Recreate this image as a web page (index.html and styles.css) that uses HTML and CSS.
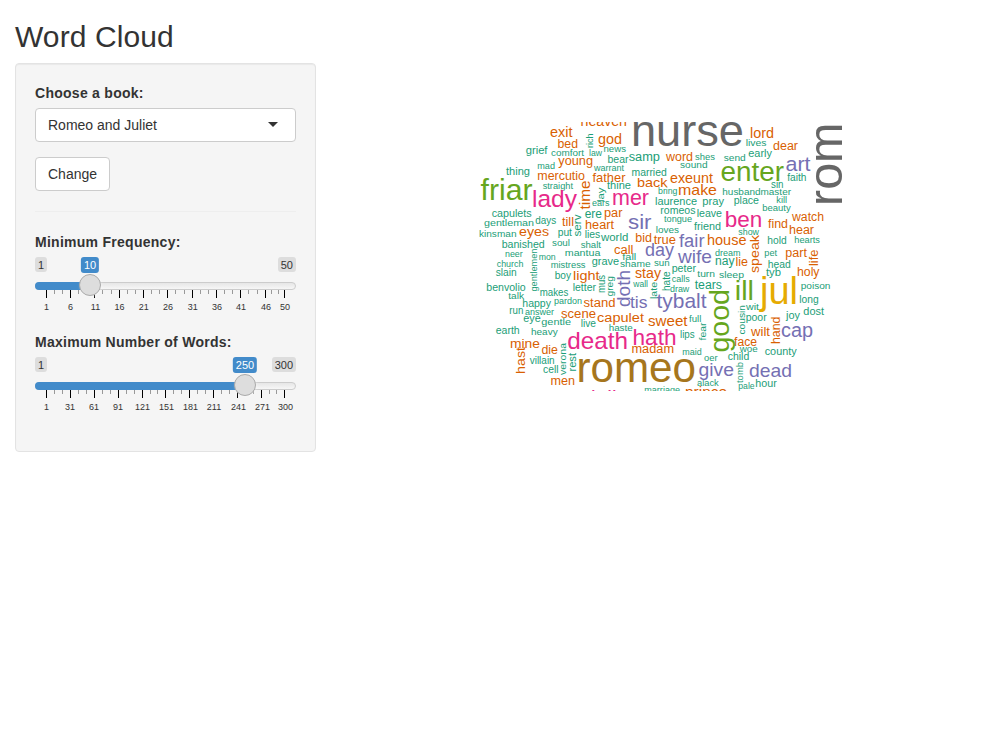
FILE: index.html
```html
<!DOCTYPE html>
<html lang="en">
<head>
<meta charset="utf-8">
<title>Word Cloud</title>
<link rel="stylesheet" href="styles.css">
</head>
<body>
<div class="container">
  <h2 class="title">Word Cloud</h2>
  <div class="row">
    <form class="well">
      <label class="label">Choose a book:</label>
      <div class="select"><span>Romeo and Juliet</span><span class="caret"></span></div>
      <button type="button" class="btn">Change</button>
      <hr class="rule">
      <label class="label">Minimum Frequency:</label>
      <div class="slider">
        <div class="bounds"><span class="bound">1</span><span class="bound">50</span></div>
        <div class="track"><div class="bar bar-freq"></div></div>
        <span class="value value-freq">10</span>
        <svg class="grid" id="grid-freq" width="261" height="24"></svg>
        <span class="handle handle-freq"></span>
      </div>
      <label class="label">Maximum Number of Words:</label>
      <div class="slider">
        <div class="bounds"><span class="bound">1</span><span class="bound">300</span></div>
        <div class="track"><div class="bar bar-max"></div></div>
        <span class="value value-max">250</span>
        <svg class="grid" id="grid-max" width="261" height="24"></svg>
        <span class="handle handle-max"></span>
      </div>
    </form>
    <main class="plot">
      <svg class="cloud" id="cloud" width="372" height="269" viewBox="475 122 372 269"></svg>
    </main>
  </div>
</div>
<script src="cloud.js"></script>
</body>
</html>
```
FILE: styles.css
```css
* { box-sizing: border-box; }
body {
  margin: 0;
  background: #fff;
  color: #333;
  font: 14px/20px "Liberation Sans", Arial, sans-serif;
}
.container { padding: 0 15px; overflow: hidden; }
.title { margin: 20px 0 10px; font-size: 30px; line-height: 33px; font-weight: 400; letter-spacing: 0.1px; }
.row { display: flex; align-items: flex-start; }
.well {
  width: 301px;
  height: 389px;
  padding: 19px;
  background: #f5f5f5;
  border: 1px solid #e3e3e3;
  border-radius: 4px;
  box-shadow: inset 0 1px 1px rgba(0, 0, 0, .05);
}
.label { display: block; margin-bottom: 5px; font-weight: 700; letter-spacing: 0.27px; }
.select {
  display: flex;
  align-items: center;
  justify-content: space-between;
  height: 34px;
  margin-bottom: 15px;
  padding: 0 17px 0 12px;
  background: #fff;
  border: 1px solid #ccc;
  border-radius: 4px;
}
.caret { margin-bottom: 1px; border: 5px solid transparent; border-top-color: #333; border-bottom: 0; }
.btn {
  display: block;
  height: 34px;
  padding: 6px 12px;
  background: #fff;
  border: 1px solid #ccc;
  border-radius: 4px;
  color: #333;
  font: inherit;
}
.rule { margin: 20px 0; border: 0; border-top: 1px solid #eee; }
.slider { position: relative; height: 60px; margin-bottom: 15px; font-size: 11px; }
.bounds { display: flex; justify-content: space-between; height: 25px; }
.bound, .value { height: 15px; padding: 0 3px; border-radius: 3px; line-height: 16px; }
.bound { background: #ddd; color: #333; }
.track {
  height: 8px;
  border: 1px solid #ccc;
  border-radius: 8px;
  background: linear-gradient(#dedede -50%, #fff 150%);
}
.bar { height: 8px; margin: -1px; background: #428bca; border-radius: 8px 0 0 8px; }
.bar-freq { width: 55px; }
.bar-max { width: 210px; }
.value { position: absolute; top: 0; height: 16px; background: #428bca; color: #fff; transform: translateX(-50%); }
.value-freq { left: 55px; }
.value-max { left: 210px; }
.grid { display: block; overflow: visible; font-size: 9px; fill: #333; text-anchor: middle; }
.major { fill: #000; }
.minor { fill: #999; }
.handle {
  position: absolute;
  top: 17px;
  width: 22px;
  height: 22px;
  background: #ddd;
  border: 1px solid #aaa;
  border-radius: 50%;
  box-shadow: 1px 1px 3px rgba(255, 255, 255, .3);
}
.handle-freq { left: 44px; }
.handle-max { left: 199px; }
.plot { flex: 1; padding: 59px 0 0 159px; }
.cloud { display: block; overflow: hidden; font-family: "Liberation Sans", Arial, sans-serif; }
.teal { fill: #1b9e77; }
.orange { fill: #d95f02; }
.purple { fill: #7570b3; }
.pink { fill: #e7298a; }
.green { fill: #66a61e; }
.yellow { fill: #e6ab02; }
.brown { fill: #a6761d; }
.gray { fill: #666; }
```
FILE: cloud.js
```js
const NS = "http://www.w3.org/2000/svg";

function add(parent, tag, attrs, text) {
  const el = document.createElementNS(NS, tag);
  for (const key in attrs) el.setAttribute(key, attrs[key]);
  if (text) el.textContent = text;
  parent.appendChild(el);
}

// Slider scales: major tick offsets, label centres and label texts
function drawGrid(id, ticks, centres, labels) {
  const svg = document.getElementById(id);
  ticks.forEach((x, i) => {
    add(svg, "rect", { class: "major", x, y: 0, width: 1, height: 8 });
    if (i < ticks.length - 1) {
      const step = (ticks[i + 1] - x) / 3;
      for (const k of [1, 2])
        add(svg, "rect", { class: "minor", x: Math.round(x + step * k), y: 0, width: 1, height: 4 });
    }
    add(svg, "text", { x: centres[i], y: 20 }, String(labels[i]));
  });
}
drawGrid("grid-freq", [11, 35, 59, 84, 108, 132, 157, 181, 205, 230, 249],
  [11.5, 35.5, 60.5, 84.5, 108.7, 133, 157.7, 182, 206, 231, 250],
  [1, 6, 11, 16, 21, 26, 31, 36, 41, 46, 50]);
drawGrid("grid-max", [11, 35, 59, 83, 107, 130, 154, 178, 202, 226, 249],
  [11.5, 35, 59, 83, 107.5, 131.5, 155.5, 179, 203.5, 227.5, 250.5],
  [1, 31, 61, 91, 121, 151, 181, 211, 241, 271, 300]);

// word, left, right, baseline, font size
const across = {
  teal: `grief 525.7 547.5 154 10;comfort 551 584 155.5 9;law 589 602 156 9;mad 537.3 555 169 9
thing 506 530 175 10;straight 542.7 573 189 9;news 603.5 626 152 9.5;bear 607.5 628.5 163 10
samp 628.7 660 161 12;shes 695 715 160 9.5;sound 680 707.5 168 9;warrant 594 624 171 8.5
married 631.5 666.7 175.5 10;thine 607 631 189 10;bring 658 677.5 193.5 8.5;laurence 655 697 204.5 10
pray 702.3 724 204.5 10;ears 592 609.5 206 8.5;lives 745.7 766.5 146 9.5;early 748.3 772 157 10
send 723.7 745.7 161 9.5;faith 787.3 806.5 181 10;sin 771 783.5 188 10;husbandmaster 722.3 791 195 9
place 733.7 759 203.5 10;kill 776.3 787 203 9;capulets 491.7 531.7 217 10.5;gentleman 484 534 226 9.5
days 535.3 556.3 223.5 10;ere 584.7 602 218 12;kinsman 479 516.5 236.5 9.5;put 557.7 572 236 10.5
lies 584.7 600.3 237.5 10;banished 501.7 544.7 248 10;soul 552 570 246 9.5;shalt 580.7 601 248 9
mantua 564.7 600.5 256 9.5;neer 505 522.7 257 9;mon 538.7 555.7 260 9;mistress 550.7 585.5 268 9
church 496.7 523.5 267 9;slain 495.7 516.7 276 10.5;boy 554.7 571 279 10;grave 591.7 619 265 10
letter 572.7 596 290.5 10;benvolio 486.3 525.7 291 10;makes 539.7 568.3 295.5 10;talk 508.3 524 299 9.5
pardon 554 582 304 9;romeos 660.3 695.5 214 10;leave 696.7 722 217 10;tongue 664 692 222 9
loves 655.7 679 233 9.5;friend 694 721 230 10;world 601 628.3 240.5 10;fall 622.3 636.3 260 9.5
shame 620 650.7 267 9.5;sun 654 669.7 266 9.5;dream 715 740.5 256 9;peter 671.7 696 272 10.5
turn 697.3 715 277 9.5;calls 671.7 689.7 281.5 9.5;tears 694.7 722 289 12;wall 633.3 648 287 8.5
draw 670 689.3 292 9;beauty 762.3 790.7 211 9;show 738.3 759 235 9;hold 767.3 786.7 243.5 10.5
hearts 794.3 820 243 9;nay 715 734.5 265 12;pet 764.3 777 256 9;head 767.7 790.7 267.5 10.5
tyb 766 781 275.5 10.5;sleep 719 744 278 9.5;poison 800.7 830.5 289 9.5;happy 522.3 551 307 10
run 509.3 523.3 314 10;answer 525 554 315 9;eye 523.3 540.7 322 10.5;gentle 541.3 571 325 9.5
live 580.7 596 327 10;earth 495.7 519.7 333.5 10;heavy 531 557.7 335 9;villain 529.7 554.7 364 10
cell 543 558.5 373 10.5;full 689 701.3 322 9;haste 608.7 632.7 331 9;lips 680 694.7 338 10
maid 682.3 701.7 355 9.5;oer 704 717.5 360.5 9;alack 697 718.7 386 9.5;marriage 644.3 680 393 8.5
wit 746 759 310 9.5;poor 745.7 766.7 321 10.5;joy 786 800 318.5 10;dost 803.3 824 315 10.5
long 799.3 818.7 303 10;woe 739.7 757.7 352 9.5;county 764.7 796.7 355 10;child 727.7 749.3 360 10
pale 738.3 754.7 389 9.5;hour 755.3 776.7 387 10.5`,
  orange: `exit 550 572.5 137 14;bed 557.5 578 148 12.5;young 558.3 593 165 12.6;mercutio 537.3 585 180 12.5
heaven 580.5 627 126 14;god 598 622 143.5 14;word 666 693 161 12.5;father 592.5 625.5 182 12.6
exeunt 670 713 183 14;back 637 667.5 187 13.5;make 678 717 195 15;lord 750 774 138 14
dear 773 798 150 12.5;till 562 574 226 13;heart 585 614 229 12.5;eyes 519 549 236 13.7
light 573 599.5 280 13.7;par 604 622.5 217 12.5;bid 635.3 652 241.5 12.5;true 653.7 676 243.5 12.5
house 707 746.5 245 14;call 614 633.5 253.5 12.5;stay 635 661 278 13.8;watch 792 824 221 12.3
find 768 788 227.5 12.5;hear 789 814 234 12.5;lie 735.5 748 265.5 12.5;part 785.3 807 256.5 12.5
holy 797 819.5 275.5 12.3;stand 583.5 615.5 307 12.5;scene 561 596 317.5 12.7;mine 510 540 347.5 13.7
die 541.5 558 354 12.5;men 550.5 575 384.5 12.5;capulet 597 644 321.5 13.7;sweet 648 687.5 326 14.2
madam 631.5 674 353 12.5;wilt 751 770 336 12.3;face 734 757 345.5 12.3;prince 685 727 397 14`,
  purple: `art 785.5 810.5 170.5 20.5;sir 628 651.5 229 21;fair 679 704.5 247 18;day 645 674 256 17.8
wife 678 712 263 18.5;tis 630 647.5 307.5 17;tybalt 656.5 706.5 308 20.8;give 698.5 734 376 19
cap 781 813 336.5 19.5;dead 749 792 377 19`,
  pink: `lady 532 577 207 24.5;mer 612 649 205 21.5;ben 724.8 762.3 227 22.5;death 567.3 628 349 24
hath 632.5 676.5 344.5 22.5;juliet 591 634 405.5 22`,
  green: `friar 480.5 532.5 200 30;enter 720.5 784 181 27.5;ill 734.8 754 300 28.5`,
  yellow: `jul 760 798 304 38`,
  brown: `romeo 576.5 696 382 42`,
  gray: `nurse 631 744 146 45`
};

// word, baseline x, bottom, top, font size; these read upwards
const upward = {
  teal: `rich 592.7 148 133.5 9;lay 604 202 187.5 9.5;serv 580.5 236.5 214.5 10;gentlemen 536.5 291.5 248.5 9.3
hate 669.5 291 271.5 10;late 656.5 299 282 9;greg 612.5 296.5 276 9;mus 605 293 275 10
verona 565.5 375 343 9;rest 575.5 371.5 353 10.5;fear 706 340.5 322.5 9.5;cousin 744.5 334.5 305 9.5
tomb 742.5 383 362 9.5`,
  orange: `time 590 209.5 180.5 14;speak 759 273 235 13.7;life 818 266 249.5 12.5;hast 525 374 347 13.7;hand 780 344 316.5 12.3`,
  purple: `doth 630 307 270 18.7`,
  green: `good 729 352.5 289 28`,
  gray: `rom 842 206 122.5 48`
};

const cloud = document.getElementById("cloud");
const parse = s => s.split(/[;\n]/).map(line => line.split(" "));
for (const color in across)
  for (const [word, x1, x2, y, size] of parse(across[color]))
    add(cloud, "text", { class: color, x: x1, y, "font-size": size, textLength: x2 - x1, lengthAdjust: "spacingAndGlyphs" }, word);
for (const color in upward)
  for (const [word, x, bottom, top, size] of parse(upward[color]))
    add(cloud, "text", { class: color, transform: `translate(${x} ${bottom}) rotate(-90)`, "font-size": size, textLength: bottom - top, lengthAdjust: "spacingAndGlyphs" }, word);
```
